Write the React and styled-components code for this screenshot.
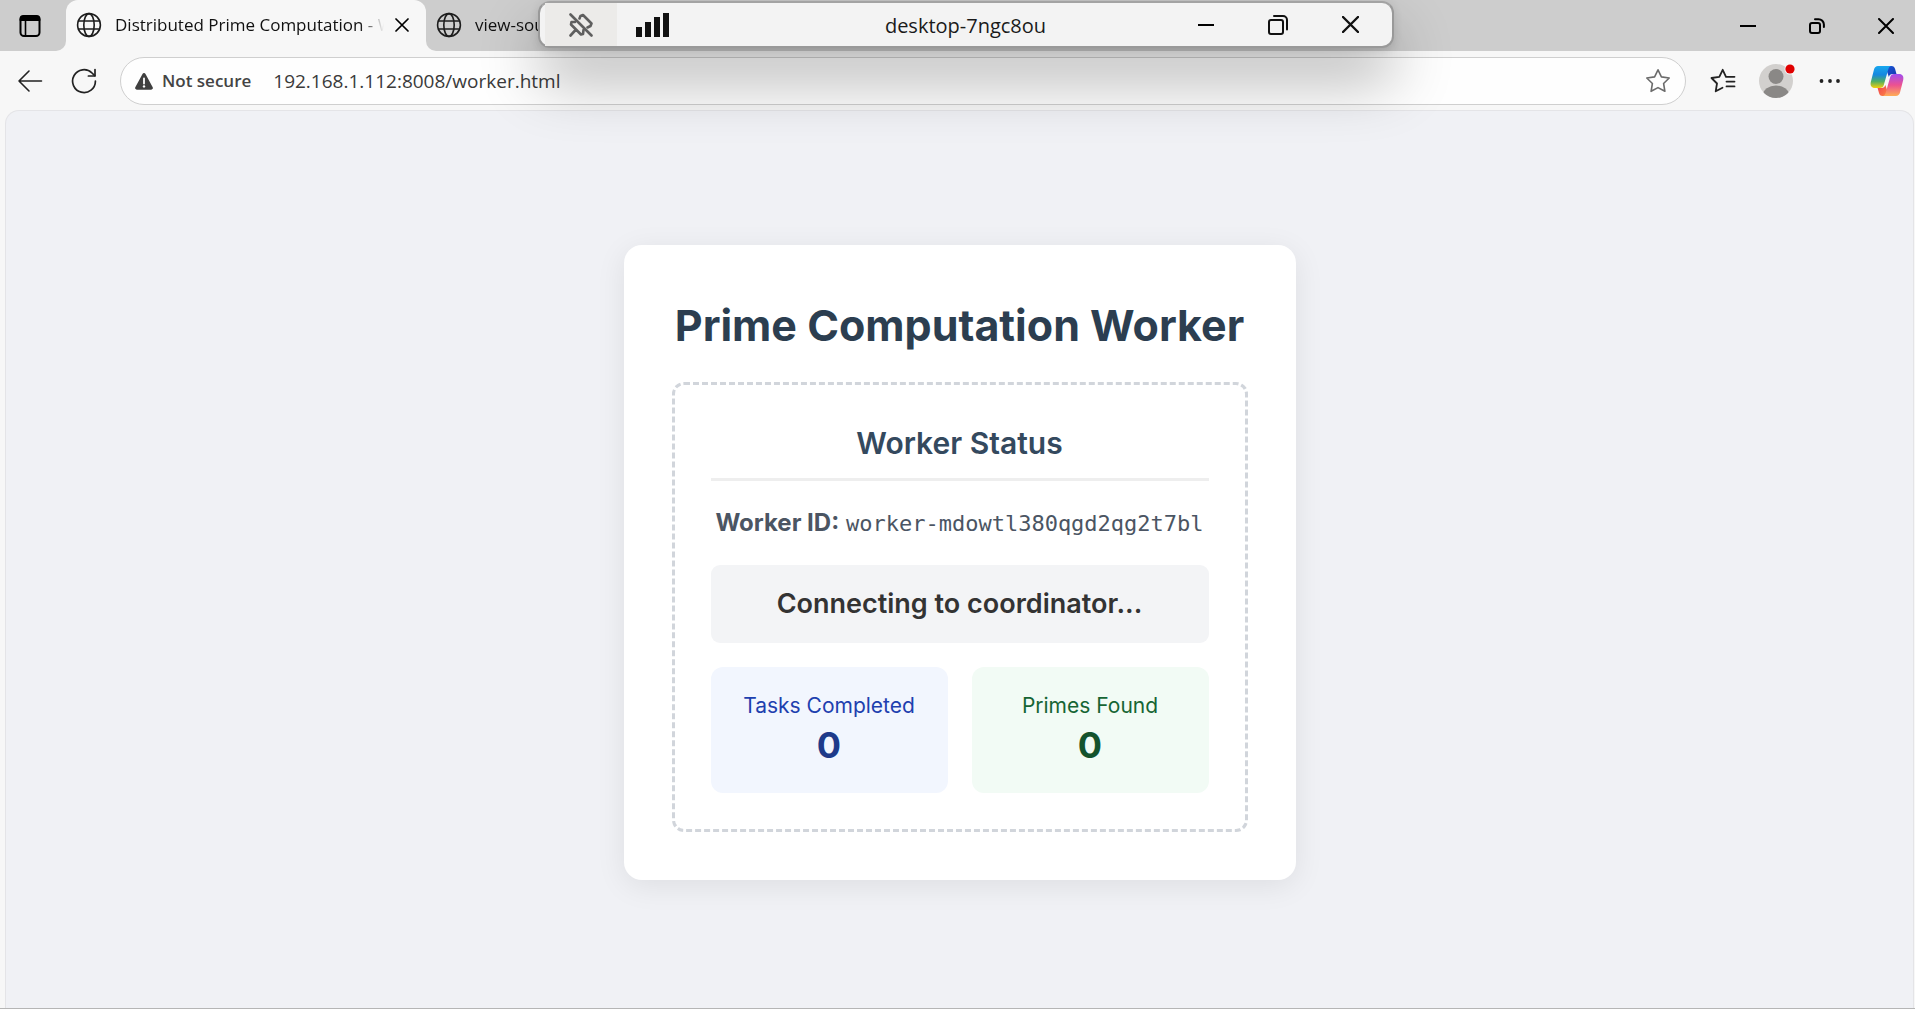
import React from "react";
import styled, { createGlobalStyle } from "styled-components";

const GlobalStyle = createGlobalStyle`
  *, *::before, *::after { box-sizing: border-box; }
  html, body { margin: 0; }
  body {
    font-family: "Open Sans", "Noto Sans", sans-serif;
    color: #1a1a1a;
    overflow: hidden;
  }
  button { font: inherit; color: inherit; }
`;

const Window = styled.div`
  position: relative;
  display: flex;
  flex-direction: column;
  height: 100vh;
  overflow: hidden;
  background: #f7f7f7;
  border-bottom: 1px solid #b5b5b5;
`;

const PlainButton = styled.button`
  display: inline-flex;
  align-items: center;
  justify-content: center;
  flex: none;
  width: ${(p) => p.$w}px;
  height: ${(p) => p.$h}px;
  padding: 0;
  border: 0;
  background: ${(p) => p.$bg || "transparent"};

  svg { display: block; }
`;

/* Tab strip */

const TabStrip = styled.header`
  display: flex;
  flex: none;
  height: 51px;
  background: #cdcdcd;
`;

const TabMenuSlot = styled.div`
  display: flex;
  background: #f7f7f7;
`;

const TabMenu = styled.div`
  display: flex;
  align-items: center;
  flex: none;
  width: 66px;
  padding-left: 7px;
  background: #cdcdcd;
  border-bottom-right-radius: 10px;
`;

const TabList = styled.div`
  display: flex;
  flex: 1;
  min-width: 0;
`;

const TabSlot = styled.div`
  display: flex;
  background: ${(p) => (p.$active ? "#cdcdcd" : "#f7f7f7")};
`;

const Tab = styled.div`
  display: flex;
  align-items: center;
  flex: none;
  width: 360px;
  padding: 0 14px 2px 10px;
  font-size: 17px;
  line-height: 24px;
  color: #111;
  background: ${(p) => (p.$active ? "#f7f7f7" : "#cdcdcd")};
  border-radius: ${(p) => (p.$active ? "12px 12px 0 0" : "0 0 0 10px")};
`;

const TabTitle = styled.span`
  flex: 1;
  min-width: 0;
  margin-left: 13px;
  white-space: nowrap;
  mask-image: linear-gradient(90deg, #000 calc(100% - 32px), transparent calc(100% - 8px));
`;

const WindowControls = styled.div`
  display: flex;
  flex: none;
  margin-right: -5px;
  background: #cdcdcd;
`;

/* Toolbar */

const Toolbar = styled.div`
  display: flex;
  align-items: center;
  flex: none;
  height: 59px;
  padding: 1px 5px 0 3px;
`;

const AddressBar = styled.form`
  display: flex;
  align-items: center;
  flex: 1;
  min-width: 0;
  height: 48px;
  margin: 0 2px 0 9px;
  padding: 0 4px 0 14px;
  background: #fefefe;
  border: 1px solid #cfcfcf;
  border-radius: 24px;
`;

const Security = styled.span`
  margin: 0 22px 0 9px;
  font-size: 17px;
  font-weight: 600;
  line-height: 24px;
  color: #444;
  white-space: nowrap;
`;

const Url = styled.input`
  flex: 1;
  min-width: 0;
  padding: 0;
  border: 0;
  outline: 0;
  background: transparent;
  font: 19px/28px "Open Sans", "Noto Sans", sans-serif;
  color: #3a3a3a;
`;

/* Remote session bar, floating over the browser window */

const RemoteBar = styled.div`
  position: absolute;
  top: 1px;
  left: 538px;
  display: flex;
  align-items: stretch;
  width: 856px;
  height: 47px;
  padding: 0 6px 0 5px;
  background: #f3f3f3;
  border: 2px solid #999;
  border-top-color: #a3a3a3;
  border-radius: 12px;
  box-shadow: 0 2px 10px rgba(0, 0, 0, 0.12), 0 32px 60px rgba(0, 0, 0, 0.3);
`;

const RemoteTitle = styled.span`
  flex: 1;
  margin-left: 72px;
  text-align: center;
  font-size: 20px;
  line-height: 45px;
  color: #1a1a1a;
`;

/* Page */

const Viewport = styled.main`
  display: flex;
  align-items: center;
  justify-content: center;
  flex: 1;
  min-height: 0;
  margin: 0 1px 0 5px;
  padding-top: 6px;
  background: #f0f1f5;
  border: 1px solid #e4e4e7;
  border-bottom: 0;
  border-radius: 14px 14px 0 0;
  font-family: Inter, "Liberation Sans", sans-serif;
  text-align: center;
`;

const Card = styled.section`
  width: 672px;
  max-width: 100%;
  padding: 48px;
  background: #fff;
  border-radius: 18px;
  box-shadow: 0 6px 30px rgba(0, 0, 0, 0.08);
`;

const Title = styled.h1`
  margin: 0 0 24px;
  font-size: 43px;
  font-weight: 700;
  line-height: 65px;
  color: #2c3e50;
  white-space: nowrap;
`;

const StatusPanel = styled.div`
  padding: 36px;
  border: 3px dashed #d1d5db;
  border-radius: 12px;
`;

const PanelTitle = styled.h2`
  margin: 0 0 24px;
  padding-bottom: 12px;
  border-bottom: 3px solid #eee;
  font-size: 30px;
  font-weight: 600;
  line-height: 45px;
  color: #34495e;
`;

const WorkerId = styled.p`
  margin: 0 0 24px;
  font-size: 24px;
  line-height: 36px;
  color: #4b5563;
  white-space: nowrap;

  strong { font-weight: 700; }
  code { font: 22px/24px "DejaVu Sans Mono", "Liberation Mono", monospace; }
`;

const Message = styled.p`
  margin: 0 0 24px;
  padding: 18px;
  font-size: 27px;
  font-weight: 600;
  line-height: 42px;
  color: #333;
  background: #f3f4f6;
  border-radius: 9px;
`;

const Stats = styled.div`
  display: grid;
  grid-template-columns: 1fr 1fr;
  gap: 24px;
`;

const Stat = styled.div`
  padding: 24px;
  background: ${(p) => p.$bg};
  border-radius: 12px;
`;

const StatLabel = styled.div`
  font-size: 21px;
  line-height: 30px;
  color: ${(p) => p.$color};
`;

const StatValue = styled.div`
  font-size: 36px;
  font-weight: 700;
  line-height: 48px;
  color: ${(p) => p.$color};
`;

/* Icons */

const Line = ({ w = 24, h = 24, sw = 2, color = "#222", children, ...rest }) => (
  <svg width={w} height={h} viewBox={`0 0 ${w} ${h}`} fill="none" stroke={color}
    strokeWidth={sw} strokeLinecap="round" strokeLinejoin="round" aria-hidden="true" {...rest}>
    {children}
  </svg>
);

const Globe = () => (
  <Line w={26} h={26} sw={1.6} color="#1c1c1c">
    <circle cx="13" cy="13" r="11.4" />
    <ellipse cx="13" cy="13" rx="5.2" ry="11.4" />
    <path d="M2.5 9h21M2.5 17h21" />
  </Line>
);

const TabActionsIcon = () => (
  <Line w={24} h={24} sw={2} color="#000">
    <rect x="2.5" y="2.5" width="19" height="19.5" rx="3.5" />
    <path d="M2.5 6V5a3 3 0 0 1 3-3h13a3 3 0 0 1 3 3v1z" fill="#000" />
    <path d="M7.5 7v15" strokeWidth="1.6" />
  </Line>
);

const CloseIcon = ({ size = 16, sw = 2, color = "#000" }) => (
  <Line w={size} h={size} sw={sw} color={color}>
    <path d={`M1 1L${size - 1} ${size - 1}M${size - 1} 1L1 ${size - 1}`} />
  </Line>
);

const MinusIcon = () => (
  <Line w={16} h={16} sw={2} color="#000" strokeLinecap="butt">
    <path d="M0 8h16" />
  </Line>
);

const WindowRestoreIcon = () => (
  <Line w={16} h={16} sw={2} color="#000">
    <rect x="1" y="5" width="10" height="10" rx="2" />
    <path d="M6 1.2h3.5a5.4 5.4 0 0 1 5.4 5.4V9" />
  </Line>
);

const RemoteRestoreIcon = () => (
  <Line w={20} h={20} sw={2} color="#111">
    <rect x="1" y="5" width="14" height="14" rx="2" />
    <path d="M6 1h9a4 4 0 0 1 4 4v9.5" />
  </Line>
);

const BackIcon = () => (
  <Line w={26} h={24} sw={1.6}>
    <path d="M12 2L2 12l10 10M2 12h22.500" />
  </Line>
);

const ReloadIcon = () => (
  <Line w={26} h={26} sw={1.7}>
    <path d="M24.4 13A11.4 11.4 0 1 1 21 5l2.700 2.700" />
    <path d="M24 1.5v6.500h-6.600" />
  </Line>
);

const WarningIcon = () => (
  <svg width="18" height="17" viewBox="0 0 18 17" aria-hidden="true">
    <path d="M7.500 1a1.700 1.700 0 0 1 3 0l7.200 13.200a1.700 1.700 0 0 1-1.500 2.500H1.800a1.700 1.700 0 0 1-1.500-2.500z" fill="#3f3f3f" />
    <path d="M9 5.500v5" stroke="#fff" strokeWidth="1.800" strokeLinecap="round" />
    <circle cx="9" cy="13.400" r="1.200" fill="#fff" />
  </svg>
);

const StarIcon = () => (
  <Line w={26} h={26} sw={1.6} color="#6b6b6b">
    <path d="M13 1.800l3.400 7.100 7.800 1.100-5.600 5.500 1.300 7.800L13 19.600l-6.900 3.700 1.300-7.800L1.800 10l7.800-1.100z" />
  </Line>
);

const FavoritesIcon = () => (
  <Line w={26} h={26} sw={1.8}>
    <path d="M12.500 19.700L5.700 23.300 7 15.500 1.500 10l7.800-1.100L12.700 1.800l3.300 7h8.500M16.500 13.600h8M16.500 18.400h8" />
  </Line>
);

const AvatarIcon = () => (
  <svg width="38" height="38" viewBox="0 0 38 38" aria-hidden="true">
    <defs><clipPath id="avatar"><circle cx="18" cy="19" r="17" /></clipPath></defs>
    <circle cx="18" cy="19" r="17" fill="#d2d0ce" />
    <g fill="#8a8886" clipPath="url(#avatar)">
      <circle cx="18" cy="14.500" r="7.500" />
      <ellipse cx="18" cy="33" rx="13" ry="9.500" />
    </g>
    <circle cx="32" cy="7" r="5.500" fill="#f7f7f7" />
    <circle cx="32" cy="7" r="4.600" fill="#e00000" />
  </svg>
);

const MoreIcon = () => (
  <svg width="22" height="6" viewBox="0 0 22 6" fill="#222" aria-hidden="true">
    <circle cx="2.500" cy="3" r="1.900" /><circle cx="11" cy="3" r="1.900" /><circle cx="19" cy="3" r="1.900" />
  </svg>
);

const CopilotIcon = () => (
  <svg width="34" height="32" viewBox="0 0 34 32" aria-hidden="true">
    <defs>
      <linearGradient id="cpA" x1="0" y1="0" x2="0" y2="1">
        <stop offset="0" stopColor="#18a8ee" /><stop offset=".4" stopColor="#1688e0" />
        <stop offset=".7" stopColor="#4fae63" /><stop offset="1" stopColor="#f5cf0a" />
      </linearGradient>
      <linearGradient id="cpB" x1="0" y1="0" x2="0" y2="1">
        <stop offset="0" stopColor="#a04df0" /><stop offset=".5" stopColor="#ec5191" />
        <stop offset="1" stopColor="#ffad55" />
      </linearGradient>
      <linearGradient id="cpC" x1="0" y1="0" x2="1" y2="1">
        <stop offset="0" stopColor="#1b57d8" /><stop offset="1" stopColor="#1237ae" />
      </linearGradient>
      <linearGradient id="cpD" x1="0" y1="0" x2="1" y2="1">
        <stop offset="0" stopColor="#ee3f50" /><stop offset="1" stopColor="#ff8a45" />
      </linearGradient>
    </defs>
    <path d="M15 1h6.500c2 0 3 1 3.600 3l1.400 5h-4c-2 0-3 .8-3.600 3z" fill="url(#cpC)" />
    <path d="M19 31h-6.500c-2 0-3-1-3.500-3l-1.400-5h4c2 0 3.200-1 3.800-3z" fill="url(#cpD)" />
    <path d="M8 1h13.500c-1.800 0-2.600 1.300-3.200 3.200L13.800 20c-.7 2.200-1.900 3-3.900 3H5C1.500 23 0 20.500 .8 17L4 4.500C4.600 2.200 6 1 8 1z" fill="url(#cpA)" />
    <path d="M26 31H12.500c1.800 0 2.600-1.300 3.200-3.200L20.200 12c.7-2.200 1.900-3 3.900-3H29c3.500 0 5 2.500 4.200 6L30 27.500c-.6 2.300-2 3.500-4 3.500z" fill="url(#cpB)" />
  </svg>
);

const UnpinIcon = () => (
  <Line w={24} h={24} sw={2.6} color="#5f5f5f">
    <path d="M1.500 1.500l21 21" />
    <path d="M10.500 5.500l1-2.500 2.500-1 8.500 8.500-1 2.500-3 1.500" />
    <path d="M6 9H2.500L2 11.500 12 21.500l2-.5.500-4M7 16.500l-5.500 6" />
  </Line>
);

const SignalIcon = () => (
  <svg width="34" height="24" viewBox="0 0 34 24" fill="#111" aria-hidden="true">
    <path d="M0 14h6v10H0zM9 9h6v15H9zM18 4h6v20h-6zM27 0h6v24h-6z" />
  </svg>
);

export default function App() {
  return (
    <>
      <GlobalStyle />
      <Window>
        <TabStrip>
          <TabMenuSlot>
            <TabMenu>
              <PlainButton $w={46} $h={46} aria-label="Tab actions"><TabActionsIcon /></PlainButton>
            </TabMenu>
          </TabMenuSlot>
          <TabList>
            <TabSlot $active>
              <Tab $active>
                <Globe />
                <TabTitle>Distributed Prime Computation - W</TabTitle>
                <PlainButton $w={20} $h={24} aria-label="Close tab"><CloseIcon size={14} sw={1.7} /></PlainButton>
              </Tab>
            </TabSlot>
            <TabSlot>
              <Tab>
                <Globe />
                <TabTitle>view-sou</TabTitle>
              </Tab>
            </TabSlot>
          </TabList>
          <WindowControls>
            <PlainButton $w={69} $h={51} aria-label="Minimize"><MinusIcon /></PlainButton>
            <PlainButton $w={69} $h={51} aria-label="Restore"><WindowRestoreIcon /></PlainButton>
            <PlainButton $w={69} $h={51} aria-label="Close"><CloseIcon /></PlainButton>
          </WindowControls>
        </TabStrip>

        <Toolbar>
          <PlainButton $w={54} $h={48} aria-label="Back"><BackIcon /></PlainButton>
          <PlainButton $w={54} $h={48} aria-label="Refresh"><ReloadIcon /></PlainButton>
          <AddressBar onSubmit={(e) => e.preventDefault()}>
            <WarningIcon />
            <Security>Not secure</Security>
            <Url aria-label="Address" defaultValue="192.168.1.112:8008/worker.html" />
            <PlainButton $w={46} $h={46} type="button" aria-label="Add to favorites"><StarIcon /></PlainButton>
          </AddressBar>
          <PlainButton $w={70} $h={48} aria-label="Favorites"><FavoritesIcon /></PlainButton>
          <PlainButton $w={38} $h={48} aria-label="Profile"><AvatarIcon /></PlainButton>
          <PlainButton $w={68} $h={48} aria-label="More"><MoreIcon /></PlainButton>
          <PlainButton $w={46} $h={48} aria-label="Copilot"><CopilotIcon /></PlainButton>
        </Toolbar>

        <Viewport>
          <Card>
            <Title>Prime Computation Worker</Title>
            <StatusPanel>
              <PanelTitle>Worker Status</PanelTitle>
              <WorkerId><strong>Worker ID:</strong> <code>worker-mdowtl380qgd2qg2t7bl</code></WorkerId>
              <Message>Connecting to coordinator...</Message>
              <Stats>
                <Stat $bg="#f2f6fe">
                  <StatLabel $color="#1e40af">Tasks Completed</StatLabel>
                  <StatValue $color="#1e3a8a">0</StatValue>
                </Stat>
                <Stat $bg="#f2fbf5">
                  <StatLabel $color="#166534">Primes Found</StatLabel>
                  <StatValue $color="#14532d">0</StatValue>
                </Stat>
              </Stats>
            </StatusPanel>
          </Card>
        </Viewport>

        <RemoteBar>
          <PlainButton $w={72} $h={43} $bg="#ecebe9" aria-label="Unpin"><UnpinIcon /></PlainButton>
          <PlainButton $w={72} $h={43} aria-label="Connection quality"><SignalIcon /></PlainButton>
          <RemoteTitle>desktop-7ngc8ou</RemoteTitle>
          <PlainButton $w={72} $h={43} aria-label="Minimize session"><MinusIcon /></PlainButton>
          <PlainButton $w={72} $h={43} aria-label="Restore session"><RemoteRestoreIcon /></PlainButton>
          <PlainButton $w={72} $h={43} aria-label="Close session"><CloseIcon size={17} sw={2.4} color="#111" /></PlainButton>
        </RemoteBar>
      </Window>
    </>
  );
}
